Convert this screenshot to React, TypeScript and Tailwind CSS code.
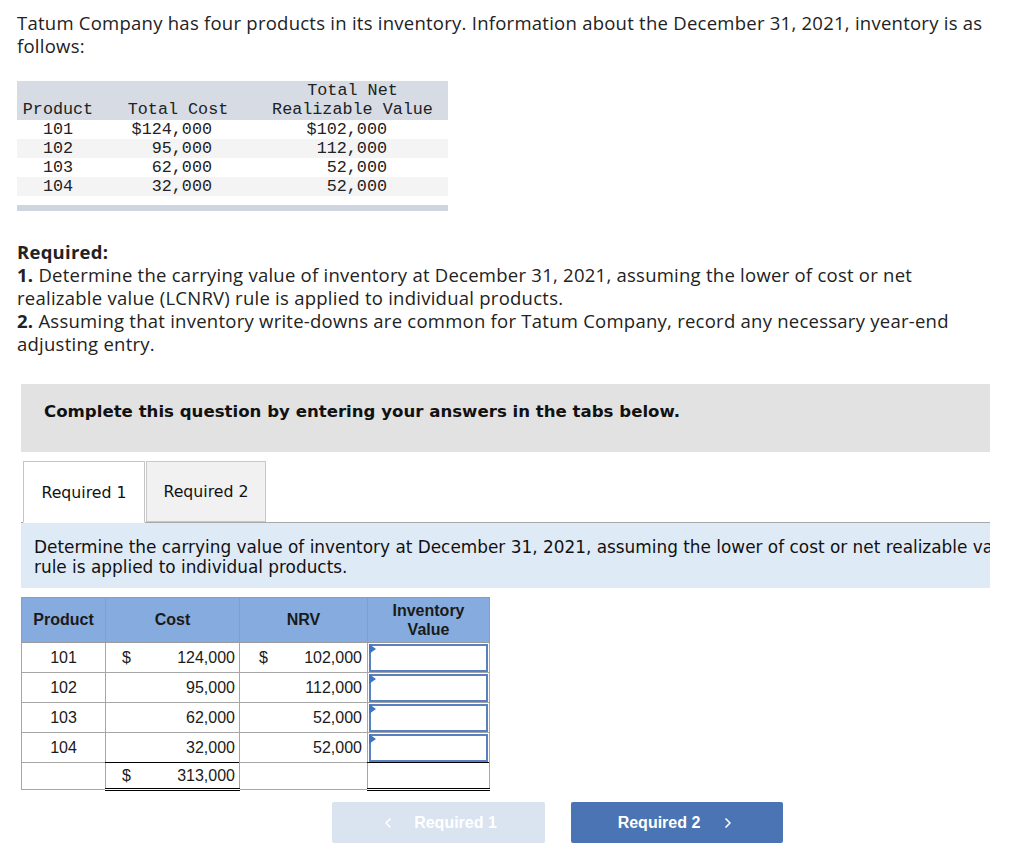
import { ChevronLeft, ChevronRight } from "lucide-react";

const givenRows = [
  { p: "101", cost: "$124,000", nrv: "$102,000" },
  { p: "102", cost: "95,000", nrv: "112,000" },
  { p: "103", cost: "62,000", nrv: "52,000" },
  { p: "104", cost: "32,000", nrv: "52,000" },
];

const answerRows = [
  { p: "101", cost: "124,000", nrv: "102,000", dollar: true },
  { p: "102", cost: "95,000", nrv: "112,000", dollar: false },
  { p: "103", cost: "62,000", nrv: "52,000", dollar: false },
  { p: "104", cost: "32,000", nrv: "52,000", dollar: false },
];

function InputCell() {
  return (
    <td className="border border-[#a6a6a6] p-0 h-[30px]">
      <div className="relative h-[28px] mx-px border-2 border-[#5a80bf] bg-white">
        <span className="absolute -left-[2px] -top-[2px] w-0 h-0 border-y-[5px] border-y-transparent border-l-[7px] border-l-[#3f74c9]" />
      </div>
    </td>
  );
}

export default function App() {
  return (
    <div className="bg-white min-h-[860px] w-[1024px] overflow-hidden text-[#222] font-['Open_Sans','Liberation_Sans',sans-serif]">
      {/* question text */}
      <div className="pl-[17px] pr-[20px] pt-[11px]">
        <p className="text-[18.5px] tracking-[0.25px] leading-[23px] whitespace-nowrap">
          Tatum Company has four products in its inventory. Information about the December 31, 2021, inventory is as
          <br />
          follows:
        </p>

        {/* given data */}
        <div className="mt-[24px] w-[431px] font-['Liberation_Mono',monospace] text-[16.75px] text-[#222]">
          <div className="flex bg-[#d6dbe4] h-[39px] items-end pb-px leading-[19px]">
            <div className="w-[82px] text-center">Product</div>
            <div className="w-[158px] text-center">Total Cost</div>
            <div className="flex-1 text-center">
              Total Net
              <br />
              Realizable Value
            </div>
          </div>
          {givenRows.map((r, i) => (
            <div key={r.p} className={`flex h-[19px] leading-[19px] ${i % 2 === 1 ? "bg-[#f4f4f4]" : "bg-white"}`}>
              <div className="w-[82px] text-center">{r.p}</div>
              <div className="w-[158px] text-right pr-[45px]">{r.cost}</div>
              <div className="flex-1 text-right pr-[61px]">{r.nrv}</div>
            </div>
          ))}
          <div className="mt-[9px] h-[6px] bg-[#cfd5e0]" />
        </div>

        <div className="mt-[29px] text-[18.5px] tracking-[0.25px] leading-[23px] whitespace-nowrap">
          <p className="font-bold">Required:</p>
          <p>
            <span className="font-bold">1.</span> Determine the carrying value of inventory at December 31, 2021, assuming the lower of cost or net
            <br />
            realizable value (LCNRV) rule is applied to individual products.
          </p>
          <p>
            <span className="font-bold">2.</span> Assuming that inventory write-downs are common for Tatum Company, record any necessary year-end
            <br />
            adjusting entry.
          </p>
        </div>
      </div>

      {/* answer area */}
      <div className="ml-[21px] w-[969px] mt-[29px] font-['DejaVu_Sans',Verdana,sans-serif] text-[#111]">
        <div className="h-[68px] bg-[#e2e2e2] pl-[23px] pt-[18px] leading-[20px] font-bold text-[16.6px] whitespace-nowrap">
          Complete this question by entering your answers in the tabs below.
        </div>

        <div className="mt-[9px] flex border-b border-[#a9a9a9] pl-[2px] text-[15.75px]">
          <div className="w-[122px] h-[62px] -mb-px bg-white border border-[#c4c4c4] border-b-white flex items-center justify-center pt-px">
            Required 1
          </div>
          <div className="w-[120px] h-[61px] bg-[#f1f1f1] border border-[#c8c8c8] ml-px flex items-center justify-center pt-px">
            Required 2
          </div>
        </div>

        <div className="h-[65px] bg-[#dfeaf7] pl-[13px] pt-[14px] leading-[20px] text-[16.9px] whitespace-nowrap overflow-hidden">
          Determine the carrying value of inventory at December 31, 2021, assuming the lower of cost or net realizable value (LCNRV)
          <br />
          rule is applied to individual products.
        </div>

        <table className="mt-[9px] border-collapse font-['Liberation_Sans',Arial,sans-serif] text-[16px] text-[#1a1a1a]">
          <colgroup>
            <col className="w-[84px]" />
            <col className="w-[134px]" />
            <col className="w-[128px]" />
            <col className="w-[122px]" />
          </colgroup>
          <thead>
            <tr className="bg-[#86abde] h-[45px]">
              <th className="border border-[#9b9b9b] font-bold">Product</th>
              <th className="border border-[#9b9b9b] font-bold">Cost</th>
              <th className="border border-[#9b9b9b] font-bold">NRV</th>
              <th className="border border-[#9b9b9b] font-bold leading-[19px]">
                Inventory
                <br />
                Value
              </th>
            </tr>
          </thead>
          <tbody>
            {answerRows.map((r) => (
              <tr key={r.p} className="h-[30px]">
                <td className="border border-[#a6a6a6] text-center">{r.p}</td>
                <td className="border border-[#a6a6a6] pl-[16px] pr-[4px]">
                  <div className="flex justify-between">
                    <span>{r.dollar ? "$" : ""}</span>
                    <span>{r.cost}</span>
                  </div>
                </td>
                <td className="border border-[#a6a6a6] pl-[19px] pr-[5px]">
                  <div className="flex justify-between">
                    <span>{r.dollar ? "$" : ""}</span>
                    <span>{r.nrv}</span>
                  </div>
                </td>
                <InputCell />
              </tr>
            ))}
            <tr className="h-[27px]">
              <td className="border border-[#a6a6a6]" />
              <td className="border-x border-x-[#a6a6a6] border-t border-t-black border-b-[3px] border-b-black border-double pl-[16px] pr-[4px]">
                <div className="flex justify-between">
                  <span>$</span>
                  <span>313,000</span>
                </div>
              </td>
              <td className="border border-[#a6a6a6]" />
              <td className="border-x border-x-[#a6a6a6] border-t border-t-black border-b-[3px] border-b-black border-double" />
            </tr>
          </tbody>
        </table>
      </div>

      {/* nav buttons */}
      <div className="mt-[11px] ml-[332px] flex gap-[26px] font-['Liberation_Sans',Arial,sans-serif] text-[16px] font-bold text-white">
        <div className="w-[213px] h-[41px] rounded-[2px] bg-[#dae3f0] flex items-center justify-center gap-[18px]">
          <ChevronLeft size={16} strokeWidth={2.5} />
          <span>Required 1</span>
        </div>
        <div className="w-[212px] h-[41px] rounded-[2px] bg-[#4a74b3] flex items-center justify-center gap-[20px]">
          <span>Required 2</span>
          <ChevronRight size={16} strokeWidth={2.5} />
        </div>
      </div>
    </div>
  );
}
